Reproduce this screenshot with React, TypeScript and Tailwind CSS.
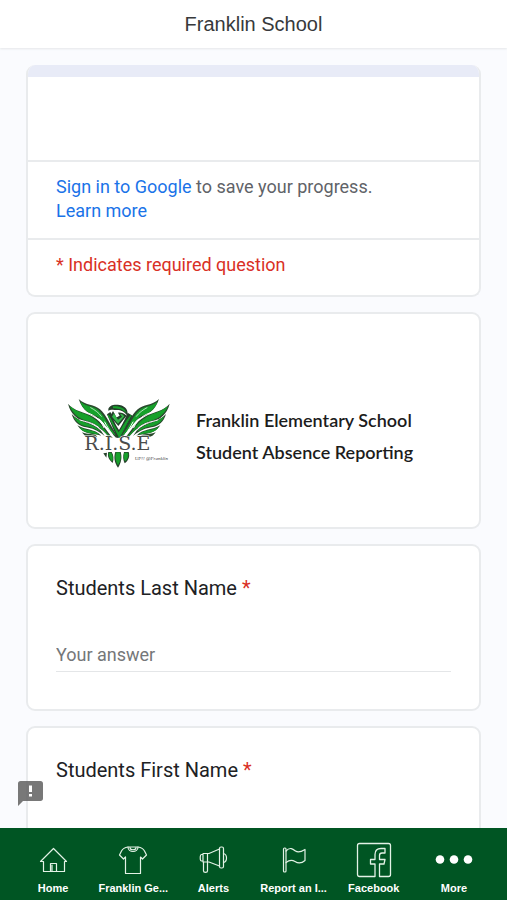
import type { ReactNode } from 'react';

const HomeIcon = () => (
  <svg width="36" height="36" viewBox="0 0 36 36" fill="none" stroke="currentColor" strokeWidth="1.2" strokeLinejoin="round" strokeLinecap="round">
    <path d="M5.5 19.5 L18.5 6.5 L31.5 19.5 H29.5 V29.5 H8.5 V19.5 Z" />
    <path d="M15.5 29.5 V21.5 H21.5 V29.5 M17 23 V29" />
  </svg>
);

const ShirtIcon = () => (
  <svg width="36" height="36" viewBox="0 0 36 36" fill="none" stroke="currentColor" strokeWidth="1.2" strokeLinejoin="round" strokeLinecap="round">
    <path d="M13 5 C9 5.5 7.5 7 6.5 9 L4.5 13 L8.5 17 L10.5 15 V31.5 H25.5 V15 L27.5 17 L31.5 13 L29.5 9 C28.5 7 27 5.5 23 5 Z" />
    <path d="M13 5 C13 11 23 11 23 5 M15 5.5 C15 8.5 21 8.5 21 5.5" />
  </svg>
);

const AlertsIcon = () => (
  <svg width="36" height="36" viewBox="0 0 36 36" fill="none" stroke="currentColor" strokeWidth="1.2" strokeLinejoin="round" strokeLinecap="round">
    <rect x="24.5" y="5" width="4" height="21" rx="1.5" />
    <path d="M24.5 7 L14 11.5 H8 V20 H14 L24.5 24 M12.5 11.5 V20 M8 12.5 H6.5 C4.8 12.5 4.8 19 6.5 19 H8" />
    <path d="M8.5 20 V29 C8.5 30.8 12.5 30.8 12.5 29 V20 M28.5 11.5 C32.5 12.5 32.5 19.5 28.5 20.5" />
  </svg>
);

const FlagIcon = () => (
  <svg width="36" height="36" viewBox="0 0 36 36" fill="none" stroke="currentColor" strokeWidth="1.2" strokeLinejoin="round" strokeLinecap="round">
    <rect x="7.5" y="6" width="2.5" height="24" rx="1" />
    <path d="M10 9 C14 4.5 17 7 19.5 9 C22 11 25 10 29 7.5 V18.5 C25 22 22 21.5 19 19.5 C16 17.5 13 18 10 20.5" />
  </svg>
);

const FacebookIcon = () => (
  <svg width="36" height="36" viewBox="0 0 36 36" fill="none" stroke="currentColor" strokeWidth="1.3" strokeLinejoin="round">
    <path d="M19 34.5 H3.5 C2.2 34.5 1.5 33.8 1.5 32.5 V3.5 C1.5 2.2 2.2 1.5 3.5 1.5 H32.5 C33.8 1.5 34.5 2.2 34.5 3.5 V32.5 C34.5 33.8 33.8 34.5 32.5 34.5 H23.5 V22 H28 L29 17.5 H23.5 V13.5 C23.5 11.8 24.3 11 26 11 H29 V6.5 H25 C21 6.5 19 9 19 12.5 V17.5 H14.5 V22 H19 Z" />
  </svg>
);

const MoreIcon = () => (
  <svg width="36" height="36" viewBox="0 0 36 36" fill="#fff" className="overflow-visible">
    <circle cx="4" cy="17.5" r="4.3" />
    <circle cx="18" cy="17.5" r="4.3" />
    <circle cx="32" cy="17.5" r="4.3" />
  </svg>
);

const NAV_ITEMS = [
  { label: 'Home', icon: HomeIcon },
  { label: 'Franklin Ge...', icon: ShirtIcon },
  { label: 'Alerts', icon: AlertsIcon },
  { label: 'Report an I...', icon: FlagIcon },
  { label: 'Facebook', icon: FacebookIcon },
  { label: 'More', icon: MoreIcon },
];

const Wing = () => (
  <g>
    <g fill="#2a4a2e">
      <path d="M56 42 C78 62 103 58 120 73 C139 89 148 117 175 157 L168 158 C148 138 136 114 118 101 C91 90 67 77 56 42 Z" />
      <path d="M24 56 C42 79 74 80 99 95 C128 111 142 142 158 158 L148 158 C132 138 111 118 84 113 C51 104 32 87 24 56 Z" />
      <path d="M35 87 C60 115 94 108 123 137 L134 153 C111 135 96 130 79 127 C55 123 42 110 35 87 Z" />
      <path d="M52 121 C76 136 102 130 124 152 C94 144 70 150 52 121 Z" />
      <path d="M66 142 C82 150 101 143 112 155 C93 154 79 162 66 142 Z" />
    </g>
    <g fill="#16a12b" stroke="#16a12b" strokeWidth="3" strokeLinejoin="round">
      <path d="M63 53 C81 68 103 64 117 79 C136 99 143 124 164 149 C139 129 126 99 108 91 C86 84 72 74 63 53 Z" />
      <path d="M32 66 C51 85 78 85 99 101 C125 118 133 139 147 153 C128 132 108 113 84 107 C57 100 41 87 32 66 Z" />
      <path d="M43 97 C66 117 92 113 118 137 C98 125 88 124 77 122 C60 118 50 111 43 97 Z" />
      <path d="M60 129 C80 139 99 136 114 147 C94 142 75 145 60 129 Z" />
    </g>
    <g fill="none" stroke="#fff" strokeWidth="3" strokeLinecap="round">
      <path d="M78 82 C99 88 119 100 132 128" />
      <path d="M60 105 C78 111 96 111 117 128" />
      <path d="M92 68 C105 75 116 83 124 94" strokeWidth="2" />
      <path d="M134 111 C143 127 149 138 157 148" />
    </g>
  </g>
);

const RiseLogo = () => (
  <svg width="120" height="90" viewBox="0 0 360 270" role="img" aria-label="R.I.S.E" className="shrink-0 overflow-visible">
    <Wing />
    <g transform="matrix(-1 0 0 1 353 0)">
      <Wing />
    </g>
    {/* chest and head */}
    <path d="M141 88 L151 81 C158 91 157 104 177 135 C194 105 196 99 203 83 L218 92 L180 158 H171 Z" fill="#24402a" />
    <path d="M144 90 C155 104 161 124 176 144 C189 126 198 107 213 91 L178 157 Z" fill="#16a12b" stroke="#16a12b" strokeWidth="3" />
    <path d="M145 72 C148 60 163 57 179 60 C197 63 206 77 202 92 C193 79 181 75 173 75 L163 75 C157 74 151 73 145 77 Z" fill="#24402a" />
    <path d="M159 64 C177 62 195 68 199 84 C184 71 175 71 159 70 Z" fill="#16a12b" />
    <path d="M159 78 L150 94 L175 123 L200 92 C191 83 180 81 174 83 L179 92 L170 97 Z" fill="#24402a" />
    <path d="M162 85 L156 95 L174 116 L193 94 C189 88 184 86 180 86 L186 95 L174 104 Z" fill="#35b84a" />
    <path d="M165 86 L176 91 L170 97 Z" fill="#fff" />
    {/* tail */}
    <g fill="#24402a">
      <path d="M166 201 C160 218 164 234 174 248 C183 234 187 218 182 201 Z" />
      <path d="M145 201 C141 214 147 225 158 234 C162 222 161 210 155 201 Z" />
      <path d="M192 201 C188 214 189 225 194 235 C206 226 210 214 206 201 Z" />
      <path d="M130 205 L139 218 L141 203 Z" />
    </g>
    <path
      d="M169 203 C165 217 168 228 174 239 C181 228 183 216 179 203 Z M147 204 C146 214 150 222 156 228 C159 217 157 211 153 204 Z M194 204 C191 213 192 222 196 228 C203 220 205 213 203 204 Z"
      fill="#16a12b"
      stroke="#16a12b"
      strokeWidth="2"
    />
    <text
      x="73"
      y="194"
      fontSize="57"
      fontFamily="DejaVu Serif, serif"
      fill="#4a4c4b"
      stroke="#fff"
      strokeWidth="3"
      strokeLinejoin="round"
      paintOrder="stroke"
    >
      R.I.S.E
    </text>
    <text x="224" y="224" fontSize="15" fontStyle="italic" fontFamily="Liberation Serif, serif" fill="#444">UP!! @Franklin</text>
  </svg>
);

const Card = ({ children }: { children: ReactNode }) => (
  <section className="shrink-0 overflow-hidden rounded-[9px] border-2 border-[#e9ebed] bg-white">{children}</section>
);

const Question = ({ id, label }: { id: string; label: string }) => (
  <Card>
    <div className="px-7 pt-7 pb-[37px]">
      <label htmlFor={id} className="block text-[20px] leading-7 text-[#202124]">
        {label} <span className="text-[#d93025]">*</span>
      </label>
      <input
        id={id}
        type="text"
        required
        placeholder="Your answer"
        className="mt-[39px] block h-[31px] w-full border-b border-[#e4e6e8] bg-transparent pb-1 text-[18px] leading-6 text-[#202124] outline-none placeholder:text-[#757779]"
      />
    </div>
  </Card>
);

const App = () => (
  <div className="flex h-screen flex-col overflow-hidden bg-[#fafbfe] font-[Roboto,sans-serif]">
    <header className="z-10 flex h-12 shrink-0 items-center justify-center bg-white shadow-[0_1px_2px_#e5e7e9]">
      <h1 className="font-['Liberation_Sans',sans-serif] text-[20px] leading-6 text-[#37393b]">Franklin School</h1>
    </header>

    <div className="relative flex min-h-0 flex-1 flex-col">
      <main className="flex min-h-0 flex-1 flex-col gap-[15px] overflow-hidden px-[26px] pt-[17px]">
        <section className="shrink-0 overflow-hidden rounded-[9px] border-2 border-t-0 border-[#e9ebed] bg-white text-[18px] leading-6">
          <div className="h-3 bg-[#e8ebf7]" />
          <div className="h-[83px]" />
          <p className="border-t-2 border-[#e9ebed] px-7 pt-[13px] pb-[15px] text-[#5f6368]">
            <a href="#signin" className="text-[#1a73e8]">Sign in to Google</a> to save your progress.
            <br />
            <a href="#learn" className="text-[#1a73e8]">Learn more</a>
          </p>
          <p className="border-t-2 border-[#e9ebed] px-7 pt-[13px] pb-[18px] text-[#d93025]">* Indicates required question</p>
        </section>

        <Card>
          <div className="flex items-center gap-4 px-8 pt-[71px] pb-[52px]">
            <RiseLogo />
            <h2 className="pt-3 font-[Lato,sans-serif] text-[18px] leading-8 font-semibold whitespace-nowrap text-[#1c1c1c]">
              Franklin Elementary School
              <br />
              Student Absence Reporting
            </h2>
          </div>
        </Card>

        <Question id="last-name" label="Students Last Name" />
        <Question id="first-name" label="Students First Name" />
      </main>

      <button type="button" aria-label="Report a problem" className="absolute bottom-[22px] left-[18px] text-[#606060]/85">
        <svg width="25" height="25" viewBox="0 0 25 25" fill="currentColor" fillRule="evenodd">
          <path d="M2.5 0 H22.5 C24 0 25 1 25 2.5 V17.5 C25 19 24 20 22.5 20 H5 L0 25 V2.5 C0 1 1 0 2.5 0 Z M11 4.5 V11 H14 V4.5 Z M11 13 V15.5 H14 V13 Z" />
        </svg>
      </button>
    </div>

    <nav className="flex h-[72px] shrink-0 bg-[#005523] px-[13px] pt-[14px] text-white">
      {NAV_ITEMS.map((item) => (
        <a key={item.label} href="#nav" className="flex min-w-0 flex-1 flex-col items-center gap-[3px]">
          <span className="text-[#e3f2e6]"><item.icon /></span>
          <span className="font-['Liberation_Sans',sans-serif] text-[11px] leading-[14px] font-bold whitespace-nowrap">{item.label}</span>
        </a>
      ))}
    </nav>
  </div>
);

export default App;
